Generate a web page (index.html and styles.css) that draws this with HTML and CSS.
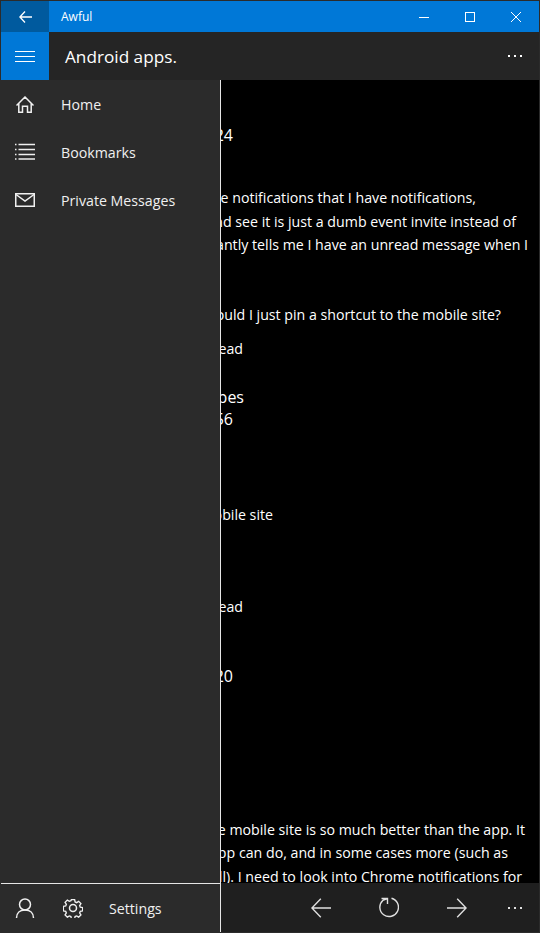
FILE: index.html
```html
<!DOCTYPE html>
<html lang="en">
<head>
<meta charset="UTF-8" />
<meta name="viewport" content="width=device-width, initial-scale=1" />
<title>Awful</title>
<link rel="stylesheet" href="styles.css">
</head>
<body>

<div class="window">
  <header class="titlebar">
    <button class="title-back" aria-label="Back">
      <svg width="13" height="12" viewBox="0 0 13 12"><path d="M6 .5.9 6 6 11.500M1 6h12"/></svg>
    </button>
    <div class="title-name">Awful</div>
    <div class="win-btn">
      <svg width="10" height="10" viewBox="0 0 10 10"><path d="M0 5.500h10"/></svg>
    </div>
    <div class="win-btn">
      <svg width="10" height="10" viewBox="0 0 10 10"><rect x=".5" y=".5" width="9" height="9"/></svg>
    </div>
    <div class="win-btn">
      <svg width="10" height="10" viewBox="0 0 10 10"><path d="M0 0l10 10M10 0 0 10"/></svg>
    </div>
  </header>

  <div class="appbar">
    <button class="hamburger" aria-label="Menu">
      <svg width="20" height="12" viewBox="0 0 20 12"><path d="M0 .5h20M0 5.500h20M0 10.500h20"/></svg>
    </button>
    <div class="page-title">Android apps.</div>
    <div class="more">
      <svg class="dots" width="14" height="2" viewBox="0 0 14 2"><path d="M0 0h2v2H0zM6 0h2v2H6zM12 0h2v2h-2z"/></svg>
    </div>
  </div>

  <main class="thread">
    <div class="post-num first end-233">#1624</div>
    <p class="post-text first-text">
      <span class="line end-476">I hate the notifications that I have notifications,</span>
      <span class="line end-516">click it and see it is just a dumb event invite instead of</span>
      <span class="line end-528">it also constantly tells me I have an unread message when I</span>
    </p>
    <div class="post-text ask"><span class="line end-501">So should I just pin a shortcut to the mobile site?</span></div>
    <div class="post-text act"><span class="line end-243">Mark read</span></div>
    <div class="post-name end-244">Gropes</div>
    <div class="post-num end-233">#1656</div>
    <div class="post-text mob"><span class="line end-273">the mobile site</span></div>
    <div class="post-text read2"><span class="line end-243">Mark read</span></div>
    <div class="post-num n3 end-233">#1620</div>
    <p class="post-text last">
      <span class="line end-525">Yeah the mobile site is so much better than the app. It</span>
      <span class="line end-508">does all the app can do, and in some cases more (such as</span>
      <span class="line end-522">the thread list in full). I need to look into Chrome notifications for</span>
    </p>
  </main>

  <footer class="cmdbar">
    <button class="cmd" aria-label="Previous">
      <svg width="20" height="20" viewBox="0 0 20 20"><path d="M9.800.8.900 10l8.900 9.200M1 10h19"/></svg>
    </button>
    <button class="cmd" aria-label="Refresh">
      <svg width="20" height="21" viewBox="0 0 20 21"><path d="M12.500 1.200A9.300 9.300 0 1 1 3.800 3.400L8.500 1.500M2.500 1.500h6v5.500"/></svg>
    </button>
    <button class="cmd" aria-label="Next">
      <svg width="20" height="20" viewBox="0 0 20 20"><path d="M10.200.8l8.900 9.200-8.900 9.200M19 10H0"/></svg>
    </button>
    <div class="more cmd-more">
      <svg class="dots" width="14" height="2" viewBox="0 0 14 2"><path d="M0 0h2v2H0zM6 0h2v2H6zM12 0h2v2h-2z"/></svg>
    </div>
  </footer>

  <nav class="drawer">
    <ul class="nav-list">
      <li class="nav-item">
        <span class="nav-icon">
          <svg width="18" height="17" viewBox="0 0 18 17"><path d="M.5 9.500 9 1l8.500 8.500M2.800 7.500v8.800h3.700v-6h5v6h3.700V7.500"/></svg>
        </span>
        Home
      </li>
      <li class="nav-item">
        <span class="nav-icon">
          <svg width="20" height="18" viewBox="0 0 20 18"><path d="M3.500 1.500H20M3.500 6.500H20M3.500 11.500H20M3.500 16H20M0 1.500h1.500M0 6.500h1.500M0 11.500h1.500M0 16h1.500"/></svg>
        </span>
        Bookmarks
      </li>
      <li class="nav-item">
        <span class="nav-icon">
          <svg width="20" height="14" viewBox="0 0 20 14"><rect x=".75" y=".75" width="18.500" height="12.500"/><path d="M1 1.500 10 8l9-6.500"/></svg>
        </span>
        Private Messages
      </li>
    </ul>
    <div class="drawer-foot">
      <span class="nav-icon">
        <svg width="20" height="20" viewBox="0 0 20 20"><circle cx="10" cy="6.500" r="5.500"/><path d="M1.500 20c0-5 3.500-8 8.500-8s8.500 3 8.500 8"/></svg>
      </span>
      <span class="gear">
        <svg width="20" height="20" viewBox="0 0 20 20"><circle cx="10" cy="10" r="3.500"/><path d="M8.200.8h3.600l.5 2.600 1.700.7 2.200-1.400 2.500 2.500-1.400 2.200.7 1.700 2.600.5v3.600l-2.600.5-.7 1.700 1.400 2.200-2.500 2.500-2.200-1.400-1.700.7-.5 2.600H8.200l-.5-2.600-1.700-.7-2.200 1.400-2.500-2.500 1.400-2.200-.7-1.700-2.600-.5V8.200l2.600-.5.7-1.700-1.400-2.200 2.500-2.500L6 2.700l1.700-.7z" transform="translate(.9 .9) scale(.91)"/></svg>
      </span>
      <span class="foot-label">Settings</span>
    </div>
  </nav>
</div>

</body>
</html>
```

FILE: styles.css
```css
* {
  box-sizing: border-box;
}
html, body {
  margin: 0;
  padding: 0;
  height: 100%;
  background: #000;
}
body {
  font-family: "Open Sans", "Noto Sans", sans-serif;
  color: #fff;
  overflow: hidden;
}
svg {
  display: block;
  fill: none;
  stroke: currentColor;
  stroke-width: 1;
}
button {
  border: none;
  padding: 0;
  color: inherit;
  background: none;
}
.window {
  position: relative;
  width: 540px;
  height: 933px;
  display: flex;
  flex-direction: column;
  background: #000;
  border: 1px solid #2b2b2b;
  overflow: hidden;
}

/* title bar */
.titlebar {
  height: 31px;
  flex: none;
  display: flex;
  align-items: center;
  background: #0078d7;
}
.title-back {
  width: 48px;
  height: 31px;
  display: flex;
  align-items: center;
  justify-content: center;
  background: #005a9e;
}
.title-back svg {
  stroke-width: 1.300;
}
.title-name {
  flex: 1;
  padding-left: 12px;
  font-size: 12px;
}
.win-btn {
  width: 46px;
  height: 31px;
  display: flex;
  align-items: center;
  justify-content: center;
}

/* app bar */
.appbar {
  height: 48px;
  flex: none;
  display: flex;
  align-items: center;
  background: #252525;
}
.hamburger {
  width: 48px;
  height: 48px;
  padding-top: 2px;
  display: flex;
  align-items: center;
  justify-content: center;
  background: #0078d7;
}
.page-title {
  flex: 1;
  padding-left: 16px;
  font-size: 17.200px;
}
.more {
  width: 48px;
  display: flex;
  justify-content: center;
}
.dots {
  fill: currentColor;
  stroke: none;
}

/* thread behind the drawer, lines keep their right ends */
.thread {
  flex: 1;
  min-height: 0;
  overflow: hidden;
  font-size: 14.200px;
}
.post-text {
  margin: 0;
  line-height: 23.500px;
}
.line {
  display: block;
  text-align: right;
  white-space: nowrap;
}
.post-name, .post-num {
  font-size: 16px;
  line-height: 22px;
  text-align: right;
  white-space: nowrap;
}
.end-233 { padding-right: 306px; }
.end-243 { padding-right: 296px; }
.end-244 { padding-right: 295px; }
.end-273 { padding-right: 266px; }
.end-476 { padding-right: 63px; }
.end-501 { padding-right: 38px; }
.end-508 { padding-right: 31px; }
.end-516 { padding-right: 23px; }
.end-522 { padding-right: 17px; }
.end-525 { padding-right: 14px; }
.end-528 { padding-right: 11px; }
.post-num.first {
  margin-top: 44px;
}
.first-text {
  margin-top: 40px;
}
.ask {
  margin-top: 46px;
}
.act {
  margin-top: 11px;
}
.post-name {
  margin-top: 25px;
}
.mob {
  margin-top: 73px;
}
.read2 {
  margin-top: 69px;
}
.n3 {
  margin-top: 46px;
}
.last {
  margin-top: 131px;
}

/* bottom bar */
.cmdbar {
  height: 49px;
  flex: none;
  display: flex;
  align-items: center;
  justify-content: flex-end;
  background: #1f1f1f;
}
.cmd {
  width: 68px;
  display: flex;
  justify-content: center;
  color: #e0e0e0;
}
.cmd svg {
  stroke-width: 1.400;
}
.cmd-more {
  color: #e0e0e0;
}

/* drawer lies over the thread */
.drawer {
  position: absolute;
  top: 79px;
  left: 0;
  bottom: 0;
  width: 220px;
  display: flex;
  flex-direction: column;
  background: #2b2b2b;
  border-right: 1px solid #e6e6e6;
}
.nav-list {
  flex: 1;
  margin: 0;
  padding: 0;
  list-style: none;
}
.nav-item {
  height: 48px;
  display: flex;
  align-items: center;
  font-size: 14.200px;
  color: #f0f0f0;
}
.nav-icon {
  width: 48px;
  margin-right: 12px;
  display: flex;
  justify-content: center;
  flex: none;
}
.nav-icon svg, .gear svg {
  stroke-width: 1.500;
}
.drawer-foot {
  height: 49px;
  display: flex;
  align-items: center;
  border-top: 1px solid #e6e6e6;
  font-size: 14.200px;
  color: #f0f0f0;
}
.drawer-foot .nav-icon {
  margin-right: 0;
}
.gear {
  width: 48px;
  display: flex;
  justify-content: center;
}
.foot-label {
  padding-left: 12px;
}
```
